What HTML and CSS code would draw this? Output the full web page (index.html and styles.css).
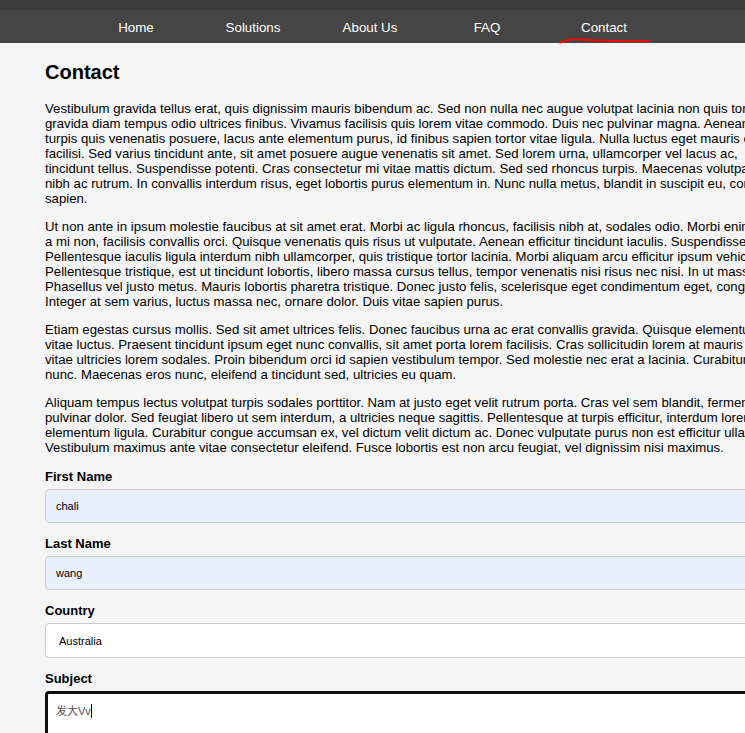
FILE: index.html
```html
<!DOCTYPE html>
<html lang="en">
<head>
<meta charset="utf-8">
<title>Contact</title>
<link rel="stylesheet" href="styles.css">
</head>
<body>
<header class="topbar">
  <nav class="nav">
    <ul class="nav-list">
      <li class="nav-item"><a href="#">Home</a></li>
      <li class="nav-item"><a href="#">Solutions</a></li>
      <li class="nav-item"><a href="#">About Us</a></li>
      <li class="nav-item"><a href="#">FAQ</a></li>
      <li class="nav-item"><a href="#">Contact</a></li>
    </ul>
  </nav>
  <svg class="scribble" width="92" height="8" viewBox="0 0 92 8">
    <path d="M1 5.5 C5 4.5 9 2.5 14 2.3 C22 2 28 3.2 36 3.4 C44 3.5 52 3.4 60 4.1 C70 4.5 80 4.3 90 4.1" fill="none" stroke="#ff0000" stroke-width="2" stroke-linecap="round"/>
  </svg>
</header>
<main class="content">
  <h2 class="title">Contact</h2>
  <p class="para">Vestibulum gravida tellus erat, quis dignissim mauris bibendum ac. Sed non nulla nec augue volutpat lacinia non quis tortor. Nullam<br>gravida diam tempus odio ultrices finibus. Vivamus facilisis quis lorem vitae commodo. Duis nec pulvinar magna. Aenean at<br>turpis quis venenatis posuere, lacus ante elementum purus, id finibus sapien tortor vitae ligula. Nulla luctus eget mauris et<br>facilisi. Sed varius tincidunt ante, sit amet posuere augue venenatis sit amet. Sed lorem urna, ullamcorper vel lacus ac,<br>tincidunt tellus. Suspendisse potenti. Cras consectetur mi vitae mattis dictum. Sed sed rhoncus turpis. Maecenas volutpat<br>nibh ac rutrum. In convallis interdum risus, eget lobortis purus elementum in. Nunc nulla metus, blandit in suscipit eu, commodo<br>sapien.</p>
  <p class="para">Ut non ante in ipsum molestie faucibus at sit amet erat. Morbi ac ligula rhoncus, facilisis nibh at, sodales odio. Morbi enim<br>a mi non, facilisis convallis orci. Quisque venenatis quis risus ut vulputate. Aenean efficitur tincidunt iaculis. Suspendisse<br>Pellentesque iaculis ligula interdum nibh ullamcorper, quis tristique tortor lacinia. Morbi aliquam arcu efficitur ipsum vehicula<br>Pellentesque tristique, est ut tincidunt lobortis, libero massa cursus tellus, tempor venenatis nisi risus nec nisi. In ut massa<br>Phasellus vel justo metus. Mauris lobortis pharetra tristique. Donec justo felis, scelerisque eget condimentum eget, congue<br>Integer at sem varius, luctus massa nec, ornare dolor. Duis vitae sapien purus.</p>
  <p class="para">Etiam egestas cursus mollis. Sed sit amet ultrices felis. Donec faucibus urna ac erat convallis gravida. Quisque elementum<br>vitae luctus. Praesent tincidunt ipsum eget nunc convallis, sit amet porta lorem facilisis. Cras sollicitudin lorem at mauris<br>vitae ultricies lorem sodales. Proin bibendum orci id sapien vestibulum tempor. Sed molestie nec erat a lacinia. Curabitur<br>nunc. Maecenas eros nunc, eleifend a tincidunt sed, ultricies eu quam.</p>
  <p class="para">Aliquam tempus lectus volutpat turpis sodales porttitor. Nam at justo eget velit rutrum porta. Cras vel sem blandit, fermentum<br>pulvinar dolor. Sed feugiat libero ut sem interdum, a ultricies neque sagittis. Pellentesque at turpis efficitur, interdum lorem<br>elementum ligula. Curabitur congue accumsan ex, vel dictum velit dictum ac. Donec vulputate purus non est efficitur ullamcorper<br>Vestibulum maximus ante vitae consectetur eleifend. Fusce lobortis est non arcu feugiat, vel dignissim nisi maximus.</p>

  <form class="form">
    <div class="field">
      <label class="label" for="fname">First Name</label>
      <input class="control autofill" id="fname" type="text" value="chali">
    </div>
    <div class="field">
      <label class="label" for="lname">Last Name</label>
      <input class="control autofill" id="lname" type="text" value="wang">
    </div>
    <div class="field">
      <label class="label" for="country">Country</label>
      <div class="control select">Australia</div>
    </div>
    <div class="field">
      <label class="label" for="subject">Subject</label>
      <div class="control textarea" id="subject"><span class="compose">发大Vv</span><span class="caret"></span></div>
    </div>
  </form>
</main>
</body>
</html>
```

FILE: styles.css
```css
html, body {
  margin: 0;
  padding: 0;
  overflow: hidden;
}
body {
  background: #f5f5f5;
  font-family: "Liberation Sans", Arial, sans-serif;
  font-size: 13px;
  color: #000;
  min-width: 1000px;
}
.topbar {
  position: relative;
  background: #3b3b3b;
  padding-top: 10px;
  width: 745px;
}
.nav {
  background: #454545;
  height: 33px;
}
.nav-list {
  list-style: none;
  margin: 0;
  padding: 0 5px 0 0;
  display: flex;
  justify-content: center;
  height: 100%;
}
.nav-item {
  width: 117px;
  display: flex;
  align-items: center;
  justify-content: center;
}
.nav-item a {
  color: #fff;
  text-decoration: none;
  font-size: 13.33px;
  padding-top: 1px;
}
.scribble {
  position: absolute;
  left: 559px;
  top: 37px;
}
.content {
  padding: 0 0 0 45px;
  width: 1100px;
}
.title {
  font-size: 20px;
  font-weight: bold;
  margin: 18px 0 17px;
}
.para {
  margin: 13px 0;
  white-space: nowrap;
  line-height: 15px;
  font-size: 13.2px;
}
.form {
  display: flex;
  flex-direction: column;
  gap: 13px;
  padding-top: 1px;
}
.field {
  display: flex;
  flex-direction: column;
  gap: 5px;
}
.label {
  font-weight: bold;
  line-height: 15px;
}
.control {
  box-sizing: border-box;
  width: 1000px;
  height: 34px;
  border: 1px solid #cccccc;
  border-radius: 4px;
  font-family: "Liberation Sans", Arial, sans-serif;
  font-size: 11px;
  color: #000;
  padding: 0 10px;
  margin: 0;
}
.autofill {
  background: #e8f0fe;
  outline: none;
}
.select {
  background: #fff;
  display: flex;
  align-items: center;
  padding-left: 13px;
  height: 35px;
}
.textarea {
  background: #fff;
  height: 120px;
  border: 3px solid #101010;
  padding: 10px 8px;
  display: flex;
  align-items: flex-start;
}
.compose {
  font-family: "Liberation Sans", "Noto Sans CJK SC", sans-serif;
  color: #555;
  font-size: 11px;
  line-height: 14px;
}
.caret {
  display: inline-block;
  width: 1px;
  height: 14px;
  background: #000;
}
```
